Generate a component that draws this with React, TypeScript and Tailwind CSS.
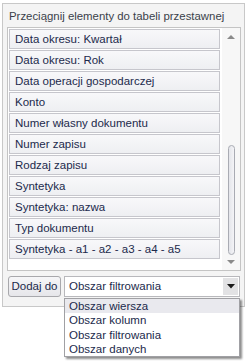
const fields = [
  'Data okresu: Kwartał',
  'Data okresu: Rok',
  'Data operacji gospodarczej',
  'Konto',
  'Numer własny dokumentu',
  'Numer zapisu',
  'Rodzaj zapisu',
  'Syntetyka',
  'Syntetyka: nazwa',
  'Typ dokumentu',
  'Syntetyka - a1 - a2 - a3 - a4 - a5',
];

const areas = ['Obszar wiersza', 'Obszar kolumn', 'Obszar filtrowania', 'Obszar danych'];

const App = () => {
  return (
    <div
      className="relative w-[246px] h-[362px] bg-white overflow-hidden text-[11.5px] text-[#1c2a4c]"
      style={{ fontFamily: '"Liberation Sans", Arial, sans-serif' }}
    >
      <div className="ml-[2px] mt-[3px] w-[243px] h-[304px] border border-[#c8c8c8] bg-[#f4f4f4] flex flex-col">
        {/* Nagłówek */}
        <div className="h-[23px] pt-[5px] pl-[6px] leading-[14px] text-[11.4px] text-[#3a3f4a] whitespace-nowrap">
          Przeciągnij elementy do tabeli przestawnej
        </div>

        {/* Lista pól */}
        <div className="ml-[4px] w-[234px] h-[244px] border border-[#c4c4c4] bg-white flex">
          <div className="w-[213px] pl-[1px] pt-[1px] flex flex-col gap-[1px]">
            {fields.map((f) => (
              <div
                key={f}
                className="h-[20px] w-[211px] border border-[#c6c6cc] bg-gradient-to-b from-[#f8f8fa] to-[#eeeff2] pl-[5px] leading-[18px] whitespace-nowrap"
              >
                {f}
              </div>
            ))}
          </div>
          <div className="ml-auto w-[18px] bg-[#f7f7f7] flex flex-col items-center">
            <svg width="8" height="5" viewBox="0 0 8 5" className="mt-[6px]">
              <path d="M0 5 L4 1 L8 5 Z" fill="#8a8a8a" />
            </svg>
            <div className="mt-[106px] w-[7px] h-[110px] rounded-[4px] border border-[#a9abb3] bg-gradient-to-r from-[#e4e5ea] to-[#f4f4f7]" />
            <svg width="8" height="5" viewBox="0 0 8 5" className="mt-[5px]">
              <path d="M0 0 L8 0 L4 4 Z" fill="#8a8a8a" />
            </svg>
          </div>
        </div>

        {/* Dolny pasek */}
        <div className="mt-[5px] ml-[5px] flex gap-[3px]">
          <button
            type="button"
            className="w-[53px] h-[21px] rounded-[3px] border border-[#a8a8ac] bg-gradient-to-b from-[#f6f6f8] to-[#e6e6ea] leading-[19px] text-[#1c2a4c] whitespace-nowrap"
          >
            Dodaj do
          </button>
          <div className="w-[176px] h-[21px] border border-[#b8b8bc] bg-white flex items-stretch">
            <span className="pl-[4px] leading-[19px] flex-1">Obszar filtrowania</span>
            <div className="w-[15px] my-[1px] mr-[1px] bg-[#e2e2e4] flex items-center justify-center">
              <svg width="8" height="5" viewBox="0 0 8 5">
                <path d="M0 0 L8 0 L4 4.5 Z" fill="#1a1a1a" />
              </svg>
            </div>
          </div>
        </div>
      </div>

      {/* Rozwinięta lista */}
      <div className="absolute left-[64px] top-[298px] w-[176px] h-[59px] border border-[#a0a0a4] bg-white shadow-[2px_2px_2px_rgba(0,0,0,0.45)] flex flex-col">
        {areas.map((a, i) => (
          <div
            key={a}
            className={`h-[14.25px] pl-[4px] leading-[14px] ${i === 0 ? 'bg-[#e9e9ee]' : ''}`}
          >
            {a}
          </div>
        ))}
      </div>
    </div>
  );
};

export default App;
